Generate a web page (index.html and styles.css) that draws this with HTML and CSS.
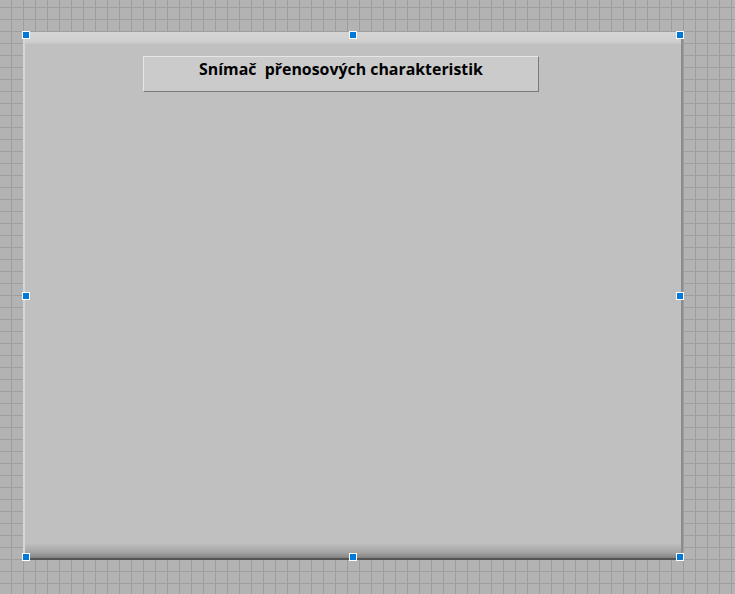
FILE: index.html
```html
<!DOCTYPE html>
<html>
<head>
<meta charset="utf-8">
<link rel="stylesheet" href="styles.css">
</head>
<body>
<div class="canvas">
  <div class="frame">
    <div class="panel">
      <div class="panel-top"></div>
      <div class="panel-body">
        <div class="title-box">Snímač&nbsp; přenosových charakteristik</div>
      </div>
      <div class="panel-bottom"></div>
    </div>
    <span class="handle h-tl"></span>
    <span class="handle h-tm"></span>
    <span class="handle h-tr"></span>
    <span class="handle h-ml"></span>
    <span class="handle h-mr"></span>
    <span class="handle h-bl"></span>
    <span class="handle h-bm"></span>
    <span class="handle h-br"></span>
  </div>
</div>
</body>
</html>
```
FILE: styles.css
```css
html, body {
  margin: 0;
  padding: 0;
}
body {
  width: 735px;
  height: 594px;
  overflow: hidden;
  background-color: #b3b3b3;
  background-image:
    linear-gradient(to right, transparent 11px, #9e9e9e 11px, #9e9e9e 12px, transparent 12px),
    linear-gradient(to bottom, transparent 7px, #9e9e9e 7px, #9e9e9e 8px, transparent 8px);
  background-size: 12px 12px;
  font-family: "Open Sans", "Noto Sans", sans-serif;
}
.canvas {
  padding: 32px 0 0 23px;
}
.frame {
  position: relative;
  width: 660px;
  height: 528px;
}
.panel {
  width: 660px;
  height: 528px;
  display: flex;
  flex-direction: column;
  background: #c0c0c0;
  box-sizing: border-box;
  border-left: 2px solid #d6d6d6;
  border-right: 2px solid #8c8c8c;
}
.panel-top {
  height: 12px;
  flex: none;
  background: linear-gradient(to bottom, #d6d6d6, #cfcfcf 80%, #c6c6c6);
}
.panel-body {
  flex: 1;
  padding: 12px 0 0 118px;
}
.panel-bottom {
  height: 14px;
  flex: none;
  background: linear-gradient(to bottom, #bdbdbd, #a4a4a4 60%, #828282);
  border-bottom: 2px solid #555555;
}
.title-box {
  width: 396px;
  height: 36px;
  box-sizing: border-box;
  background: #cbcbcb;
  border-top: 1px solid #e6e6e6;
  border-left: 1px solid #e6e6e6;
  border-right: 1px solid #7a7a7a;
  border-bottom: 1px solid #7a7a7a;
  text-align: center;
  font-weight: 700;
  font-size: 15.9px;
  line-height: 24px;
  color: #000;
  padding-top: 0;
  white-space: pre;
}
.handle {
  position: absolute;
  width: 8px;
  height: 8px;
  box-sizing: border-box;
  background: #0078d7;
  border: 1px solid #ffffff;
}
.h-tl { left: -1px; top: -1px; }
.h-tm { left: 326px; top: -1px; }
.h-tr { left: 653px; top: -1px; }
.h-ml { left: -1px; top: 260px; }
.h-mr { left: 653px; top: 260px; }
.h-bl { left: -1px; top: 521px; }
.h-bm { left: 326px; top: 521px; }
.h-br { left: 653px; top: 521px; }
```
